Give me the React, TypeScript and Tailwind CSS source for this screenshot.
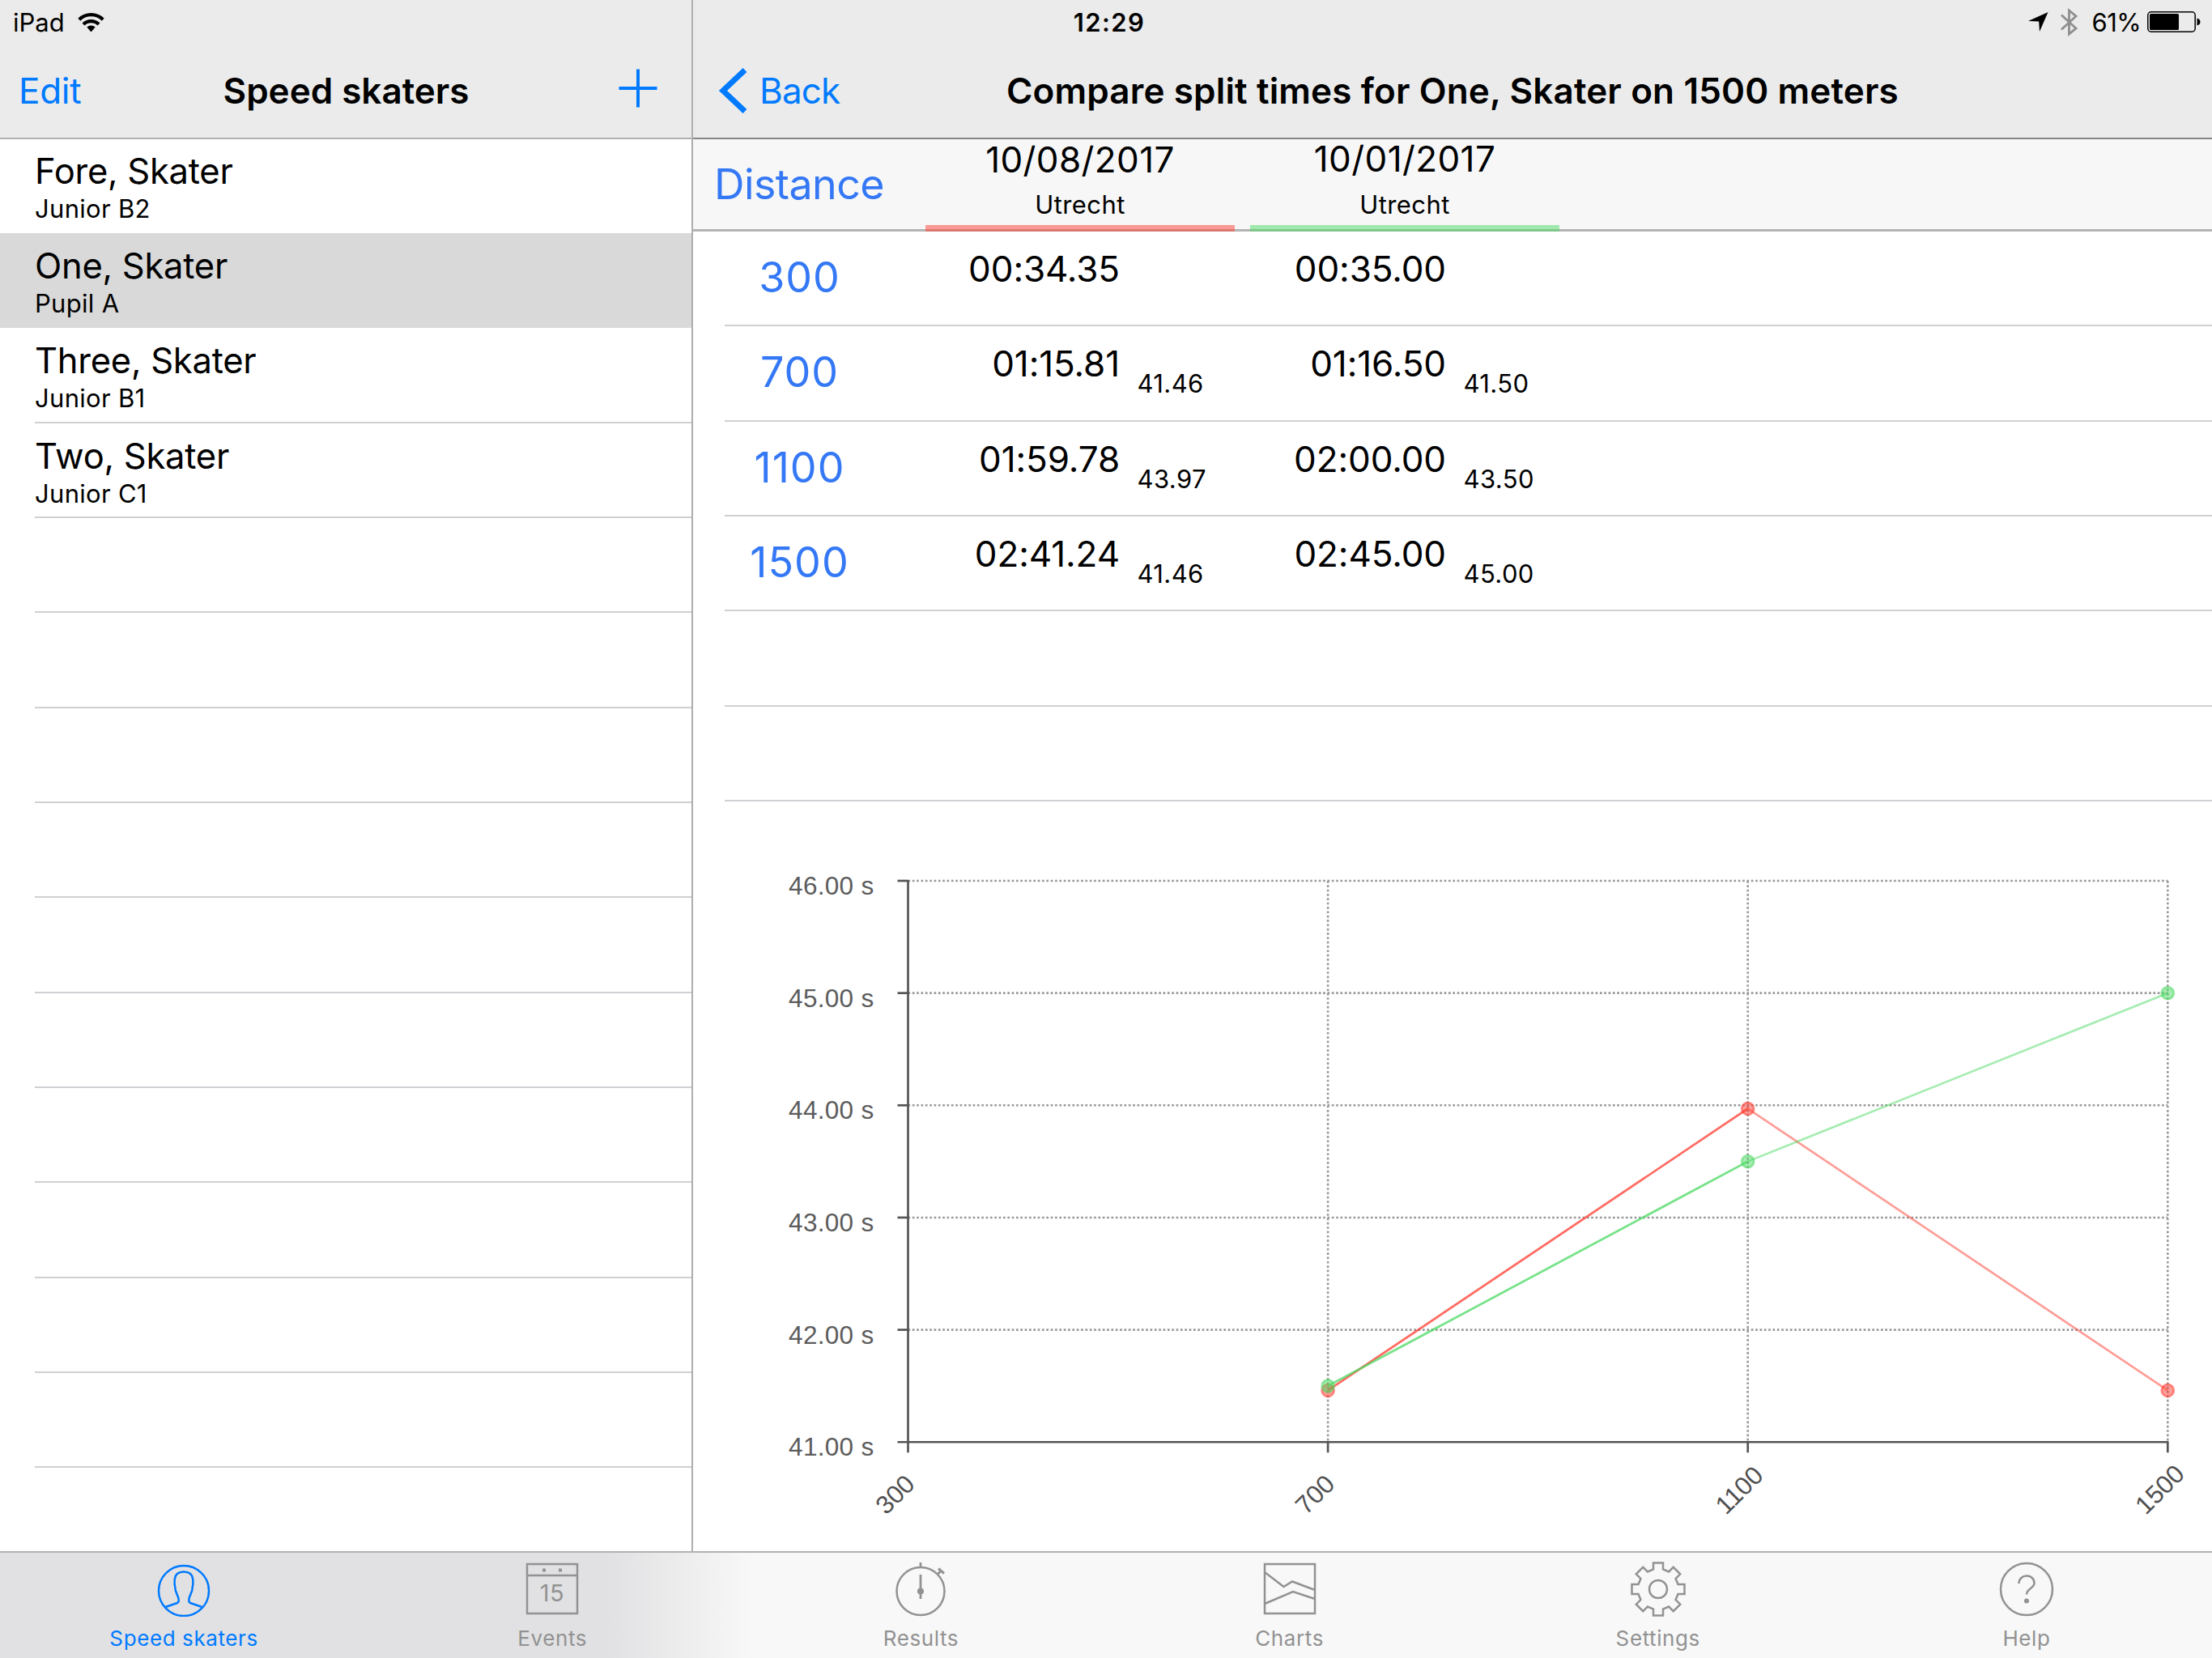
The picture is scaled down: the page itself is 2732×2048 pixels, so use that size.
import React from "react";

interface Skater {
  name: string;
  category: string;
}

interface Split {
  distance: number;
  times: { total: string; lap?: string }[];
}

interface Race {
  date: string;
  venue: string;
  bar: string;
  dateOffset: string;
}

const skaters: Skater[] = [
  { name: "Fore, Skater", category: "Junior B2" },
  { name: "One, Skater", category: "Pupil A" },
  { name: "Three, Skater", category: "Junior B1" },
  { name: "Two, Skater", category: "Junior C1" },
];

const races: Race[] = [
  { date: "10/08/2017", venue: "Utrecht", bar: "bg-[#ff3b30]/50", dateOffset: "pt-[1px]" },
  { date: "10/01/2017", venue: "Utrecht", bar: "bg-[#4cd964]/50", dateOffset: "pt-0" },
];

const splits: Split[] = [
  { distance: 300, times: [{ total: "00:34.35" }, { total: "00:35.00" }] },
  { distance: 700, times: [{ total: "01:15.81", lap: "41.46" }, { total: "01:16.50", lap: "41.50" }] },
  { distance: 1100, times: [{ total: "01:59.78", lap: "43.97" }, { total: "02:00.00", lap: "43.50" }] },
  { distance: 1500, times: [{ total: "02:41.24", lap: "41.46" }, { total: "02:45.00", lap: "45.00" }] },
];

const series = [
  { color: "#ff3b30", laps: [41.46, 43.97, 41.46] },
  { color: "#4cd964", laps: [41.5, 43.5, 45] },
];

function StatusBar() {
  return (
    <div className="grid h-[56px] grid-cols-3 items-center pb-[2px] pl-[16px] pr-[14px] text-[31px] leading-none">
      <div className="flex items-center gap-[16px]">
        <span>iPad</span>
        <svg width="33" height="25" viewBox="0 0 33 25" fill="none" stroke="#000" strokeWidth="4.2">
          <path d="M1.8 9.2a21 21 0 0 1 29.4 0" />
          <path d="M7 15a13.4 13.4 0 0 1 19 0" />
          <path d="M16.5 24.5l-5.2-6a7.6 7.6 0 0 1 10.4 0z" fill="#000" stroke="none" />
        </svg>
      </div>
      <div className="pl-[6px] text-center font-semibold tracking-[1.4px]">12:29</div>
      <div className="flex items-center justify-end">
        <svg width="25" height="24" viewBox="0 0 25 24" className="mr-[15px]">
          <path d="M24.5 0L14 24L13.2 11.6L0 11z" fill="#000" />
        </svg>
        <svg width="21" height="35" viewBox="0 0 21 35" className="mr-[18px]" fill="none" stroke="#8e8e8e" strokeWidth="2.8">
          <path d="M1 8.5L19 25L10.5 32V3L19 10L1 26.5" />
        </svg>
        <span className="mr-[8px] tracking-[-0.6px]">61%</span>
        <svg width="66" height="26" viewBox="0 0 66 26">
          <rect x="0.8" y="0.8" width="58.4" height="24.4" rx="4" fill="none" stroke="#000" strokeWidth="1.5" />
          <rect x="3" y="3" width="36" height="20" rx="1.5" fill="#000" />
          <path d="M61.5 8.5q4 1 4 4.5t-4 4.5z" fill="#000" />
        </svg>
      </div>
    </div>
  );
}

function Sidebar() {
  return (
    <aside className="flex w-[856px] flex-col border-r-2 border-[#adadad] bg-white">
      {skaters.map((skater, index) => (
        <div
          key={skater.name}
          className={`relative shrink-0 pl-[43px] ${index === 0 ? "h-[116px]" : "h-[117.35px]"} ${index === 1 ? "bg-[#d9d9d9]" : ""}`}
        >
          <div className={`text-[43.5px] leading-[56px] tracking-[-0.25px] ${index === 0 ? "pt-[11px]" : "pt-[12px]"}`}>{skater.name}</div>
          <div className="pt-[1px] text-[31px] leading-[36px] tracking-[0.3px]">{skater.category}</div>
          {index > 1 && <div className="absolute bottom-0 left-[43px] right-0 h-[2px] bg-[#d0cfd3]" />}
        </div>
      ))}
      {Array.from({ length: 10 }).map((_, index) => (
        <div key={index} className="h-[117.35px] shrink-0 pl-[43px]">
          <div className="h-full border-b-2 border-[#d0cfd3]" />
        </div>
      ))}
    </aside>
  );
}

function SplitTable() {
  return (
    <div>
      {/* Races being compared */}
      <div className="flex h-[114px] border-b-[3px] border-[#b4b4b4] bg-[#f7f7f7]">
        <div className="w-[287px] pl-[26px] pt-[26px] text-[52px] leading-[60px] tracking-[-0.6px] text-[#3478f6]">Distance</div>
        {races.map((race) => (
          <div key={race.date} className="mr-[19px] flex h-[114px] w-[382px] flex-col text-center">
            <div className={`text-[44px] leading-[48px] tracking-[0.4px] ${race.dateOffset}`}>{race.date}</div>
            <div className="mt-auto text-[31px] leading-[36px] tracking-[0.4px]">{race.venue}</div>
            <div className={`mt-[7px] h-[8px] shrink-0 ${race.bar}`} />
          </div>
        ))}
      </div>
      {/* Split times */}
      {splits.map((split) => (
        <div key={split.distance} className="h-[117.35px] pl-[39px]">
          <div className="flex h-full border-b-2 border-[#d0cfd3]">
            <div className="w-[185px] pt-[27px] text-center text-[52px] leading-[60px] tracking-[1px] text-[#3478f6]">{split.distance}</div>
            {split.times.map((time, index) => (
              <div key={index} className="flex w-[403px] shrink-0">
                <div className="w-[303px] shrink-0 pt-[18px] text-right text-[44px] leading-[56px] tracking-[-0.1px]">{time.total}</div>
                <div className="pl-[21.5px] pt-[53px] text-[31px] leading-[36px] tracking-[0.4px]">{time.lap}</div>
              </div>
            ))}
          </div>
        </div>
      ))}
      {[0, 1].map((row) => (
        <div key={row} className="h-[117.35px] pl-[39px]">
          <div className="h-full border-b-2 border-[#d0cfd3]" />
        </div>
      ))}
    </div>
  );
}

function LapChart() {
  const left = 265.5;
  const top = 98;
  const stepX = 518.6;
  const stepY = 138.65;
  const bottom = top + stepY * 5;
  const right = left + stepX * 3;
  const x = (i: number) => left + i * stepX;
  const y = (lap: number) => bottom - (lap - 41) * stepY;

  return (
    <svg width="1876" height="926" viewBox="0 0 1876 926" className="block" fontFamily="Liberation Sans, Arial, sans-serif">
      {/* Grid */}
      <g stroke="#999" strokeWidth="2.6" strokeDasharray="2.67 2.67">
        {[42, 43, 44, 45, 46].map((lap) => (
          <line key={lap} x1={left} x2={right} y1={y(lap)} y2={y(lap)} />
        ))}
        {[1, 2, 3].map((i) => (
          <line key={i} x1={x(i)} x2={x(i)} y1={top} y2={bottom} />
        ))}
      </g>
      {/* Axes */}
      <g stroke="#555" strokeWidth="2.7">
        <line x1={left} x2={left} y1={top - 1} y2={bottom + 13} />
        <line x1={left - 13} x2={right + 1} y1={bottom} y2={bottom} />
        {[42, 43, 44, 45, 46].map((lap) => (
          <line key={lap} x1={left - 13} x2={left} y1={y(lap)} y2={y(lap)} />
        ))}
        {[1, 2, 3].map((i) => (
          <line key={i} x1={x(i)} x2={x(i)} y1={bottom} y2={bottom + 13} />
        ))}
      </g>
      <g fill="#5c5c5c" fontSize="31.5">
        {[41, 42, 43, 44, 45, 46].map((lap) => (
          <text key={lap} x={left - 42} y={y(lap) + 17} textAnchor="end" letterSpacing="0.3">
            {lap.toFixed(2)} s
          </text>
        ))}
      </g>
      <g fill="#505050" fontSize="31.5">
        {splits.map((split, i) => (
          <text key={split.distance} transform={`translate(${x(i) - 27} ${bottom + 91}) rotate(-45)`}>
            {split.distance}
          </text>
        ))}
      </g>
      {/* The first leg is stroked twice, so it comes out stronger */}
      {series.map(({ color, laps }) => (
        <g key={color} stroke={color} strokeOpacity="0.5" strokeWidth="2.67" fill="none">
          <path d={`M${x(1)} ${y(laps[0])}L${x(2)} ${y(laps[1])}`} />
          <path d={`M${x(1)} ${y(laps[0])}L${x(2)} ${y(laps[1])}L${x(3)} ${y(laps[2])}`} />
          {laps.map((lap, i) => (
            <circle key={i} cx={x(i + 1)} cy={y(lap)} r="7.6" fill={color} fillOpacity="0.5" />
          ))}
        </g>
      ))}
    </svg>
  );
}

function gearPath() {
  // eight square teeth around the wheel
  const points: string[] = [];
  for (let i = 0; i < 8; i++) {
    const mid = (i * Math.PI) / 4 - Math.PI / 2;
    [[24.5, -6], [32.5, -6], [32.5, 6], [24.5, 6]].forEach(([r, side]) => {
      const px = 34 + r * Math.cos(mid) - side * Math.sin(mid);
      const py = 34 + r * Math.sin(mid) + side * Math.cos(mid);
      points.push(`${px.toFixed(2)} ${py.toFixed(2)}`);
    });
  }
  return `M${points.join("L")}Z`;
}

const tabs = [
  {
    label: "Speed skaters",
    icon: (
      <>
        <circle cx="34" cy="36" r="31" />
        <path d="M11.5 56L26 51Q28 50 27.7 47.5C27.5 41 23 38.5 23.2 31C22 27 22.8 23 22.8 21.5C23.5 15 28 12.5 34 12.5S44.5 15 45.2 21.5C45.2 23 46 27 44.8 31C45 38.5 40.5 41 40.3 47.5Q40 50 42 51L56.5 56" />
      </>
    ),
  },
  {
    label: "Events",
    icon: (
      <>
        <path d="M3 3H65V64H3ZM3 17H65" />
        <path d="M24 8.5v4M44 8.5v4" strokeWidth="4" />
        <text x="34" y="49" textAnchor="middle" fontSize="29" letterSpacing="0.5" fill="currentColor" stroke="none">15</text>
      </>
    ),
  },
  {
    label: "Results",
    icon: (
      <>
        <circle cx="34" cy="36.5" r="29.5" />
        <path d="M34 1V7M34 16V46" strokeWidth="2.8" />
        <path d="M55 15.5L59 11.5M56 8.5L63 14.5" strokeWidth="3" />
        <circle cx="34" cy="36.5" r="2.8" fill="currentColor" />
      </>
    ),
  },
  {
    label: "Charts",
    icon: <path d="M3 3H65V64H3ZM3 13L26.5 31L37 24.5L65 35M3 52L38 37L65 46" />,
  },
  {
    label: "Settings",
    icon: (
      <>
        <path d={gearPath()} />
        <circle cx="34" cy="34" r="11" />
      </>
    ),
  },
  {
    label: "Help",
    icon: (
      <>
        <circle cx="34" cy="34" r="32" />
        <path d="M24.5 27C24.5 14.5 43.5 14.5 43.5 26.5C43.5 33 34 33 34 40.5" />
        <circle cx="34" cy="48.5" r="1.8" fill="currentColor" />
      </>
    ),
  },
];

function TabBar() {
  return (
    <nav className="flex h-[132px] border-t-2 border-[#b2b2b2] bg-linear-to-r from-[#e1e1e3] from-[750px] to-[#f8f8f8] to-[930px] pr-[1px]">
      {tabs.map((tab, index) => (
        <div key={tab.label} className={`flex flex-1 flex-col items-center pr-[1px] pt-[11px] ${index === 0 ? "text-[#007aff]" : "text-[#929292]"}`}>
          <svg width="68" height="68" viewBox="0 0 68 68" fill="none" stroke="currentColor" strokeWidth="2.5">
            {tab.icon}
          </svg>
          <span className="mt-[11px] text-[26px] leading-[32px] tracking-[0.6px]">{tab.label}</span>
        </div>
      ))}
    </nav>
  );
}

export default function App() {
  return (
    <div className="flex h-[2048px] w-[2732px] flex-col overflow-hidden bg-white font-[Inter,sans-serif] text-black">
      <header className="h-[172px] shrink-0 bg-[#ebebeb]">
        <StatusBar />
        <div className="flex h-[116px] text-[44px] leading-[56px]">
          <div className="-mt-[56px] flex w-[856px] items-start border-b-2 border-r-2 border-[#b0b0b0] pl-[23px] pr-[42px] pt-[84px]">
            <span className="w-[120px] tracking-[-0.3px] text-[#007aff]">Edit</span>
            <span className="flex-1 pl-[20px] text-center font-semibold">Speed skaters</span>
            <span className="flex w-[120px] justify-end pt-px">
              <svg width="48" height="48" viewBox="0 0 48 48" stroke="#007aff" strokeWidth="4">
                <path d="M24 0.5V47.5M0.5 24H47.5" />
              </svg>
            </span>
          </div>
          <div className="grid flex-1 grid-cols-[387px_1100px_1fr] border-b-2 border-[#858585] pt-[28px]">
            <div className="flex pl-[31px] text-[#007aff]">
              <svg width="36" height="56" viewBox="0 0 36 56" fill="none" stroke="#007aff" strokeWidth="7">
                <path d="M33 2.5L6 28L33 53.5" />
              </svg>
              <span className="pl-[15px] tracking-[-0.9px]">Back</span>
            </div>
            <span className="whitespace-nowrap text-center font-semibold tracking-[0.15px]">Compare split times for One, Skater on 1500 meters</span>
          </div>
        </div>
      </header>
      <main className="flex min-h-0 flex-1">
        <Sidebar />
        <section className="min-w-0 flex-1 bg-white">
          <SplitTable />
          <LapChart />
        </section>
      </main>
      <TabBar />
    </div>
  );
}
